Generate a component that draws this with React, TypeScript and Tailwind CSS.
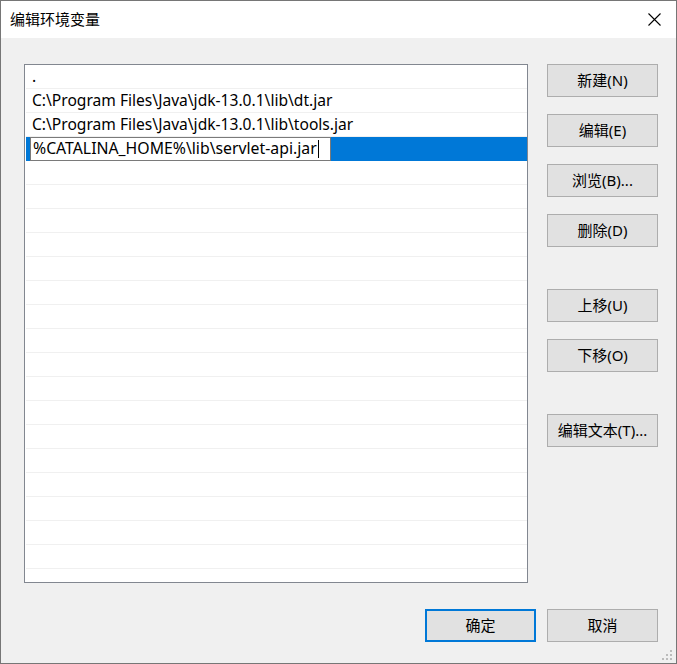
import React from "react";

const FONT = { fontFamily: '"Noto Sans", "Noto Sans CJK SC", sans-serif' };

const ROWS = [
  ".",
  "C:\\Program Files\\Java\\jdk-13.0.1\\lib\\dt.jar",
  "C:\\Program Files\\Java\\jdk-13.0.1\\lib\\tools.jar",
];

function Btn({ label, primary, className = "" }: { label: string; primary?: boolean; className?: string }) {
  return (
    <button
      className={`w-[111px] h-[33px] bg-[#e1e1e1] text-[15px] text-black flex items-center justify-center ${
        primary ? "border-2 border-[#0078d7]" : "border border-[#adadad]"
      } ${className}`}
    >
      {label}
    </button>
  );
}

export default function App() {
  const empties = Array.from({ length: 17 });

  return (
    <div className="w-[677px] h-[664px] border border-[#767676] flex flex-col bg-white" style={FONT}>
      {/* title bar */}
      <div className="h-[37px] bg-white flex items-center justify-between pl-[9px] pr-[14px] shrink-0">
        <span className="text-[15px] text-black">编辑环境变量</span>
        <svg width="13" height="13" viewBox="0 0 13 13" className="mr-[1px]">
          <path d="M0.5 0.5 L12.5 12.5 M12.5 0.5 L0.5 12.5" stroke="#000" strokeWidth="1.1" fill="none" />
        </svg>
      </div>

      {/* body */}
      <div className="flex-1 bg-[#f0f0f0] relative flex flex-col pl-[23px] pt-[26px]">
        <div className="flex">
          {/* list */}
          <div className="w-[504px] h-[519px] border border-[#828790] bg-white overflow-hidden">
            {ROWS.map((r) => (
              <div key={r} className="h-[24px] ml-px border-b border-[#f0f0f0] pl-[6px] flex items-center text-[15.6px] text-black whitespace-nowrap">
                {r}
              </div>
            ))}
            <div className="h-[24px] ml-px bg-[#0078d7] relative">
              <div className="absolute left-[4px] top-0 w-[301px] h-[24px] bg-white border border-[#7a7a7a] flex items-center pl-[2px] text-[15.8px] text-black whitespace-nowrap">
                %CATALINA_HOME%\lib\servlet-api.jar
                <span className="inline-block w-px h-[18px] bg-black ml-px" />
              </div>
            </div>
            {empties.map((_, i) => (
              <div key={i} className="h-[24px] ml-px border-b border-[#f0f0f0]" />
            ))}
          </div>

          {/* buttons */}
          <div className="ml-[19px] flex flex-col">
            <Btn label="新建(N)" />
            <Btn label="编辑(E)" className="mt-[17px]" />
            <Btn label="浏览(B)..." className="mt-[17px]" />
            <Btn label="删除(D)" className="mt-[17px]" />
            <Btn label="上移(U)" className="mt-[42px]" />
            <Btn label="下移(O)" className="mt-[17px]" />
            <Btn label="编辑文本(T)..." className="mt-[42px]" />
          </div>
        </div>

        {/* footer */}
        <div className="flex justify-end gap-[11px] mt-[26px] pr-[18px]">
          <Btn label="确定" primary />
          <Btn label="取消" />
        </div>

        {/* resize grip */}
        <svg width="12" height="12" viewBox="0 0 12 12" className="absolute right-[2px] bottom-[1px]">
          <rect x="8" y="0" width="2" height="2" fill="#bcbcbc" />
          <rect x="4" y="4" width="2" height="2" fill="#bcbcbc" />
          <rect x="8" y="4" width="2" height="2" fill="#bcbcbc" />
          <rect x="0" y="8" width="2" height="2" fill="#bcbcbc" />
          <rect x="4" y="8" width="2" height="2" fill="#bcbcbc" />
          <rect x="8" y="8" width="2" height="2" fill="#bcbcbc" />
        </svg>
      </div>
    </div>
  );
}
